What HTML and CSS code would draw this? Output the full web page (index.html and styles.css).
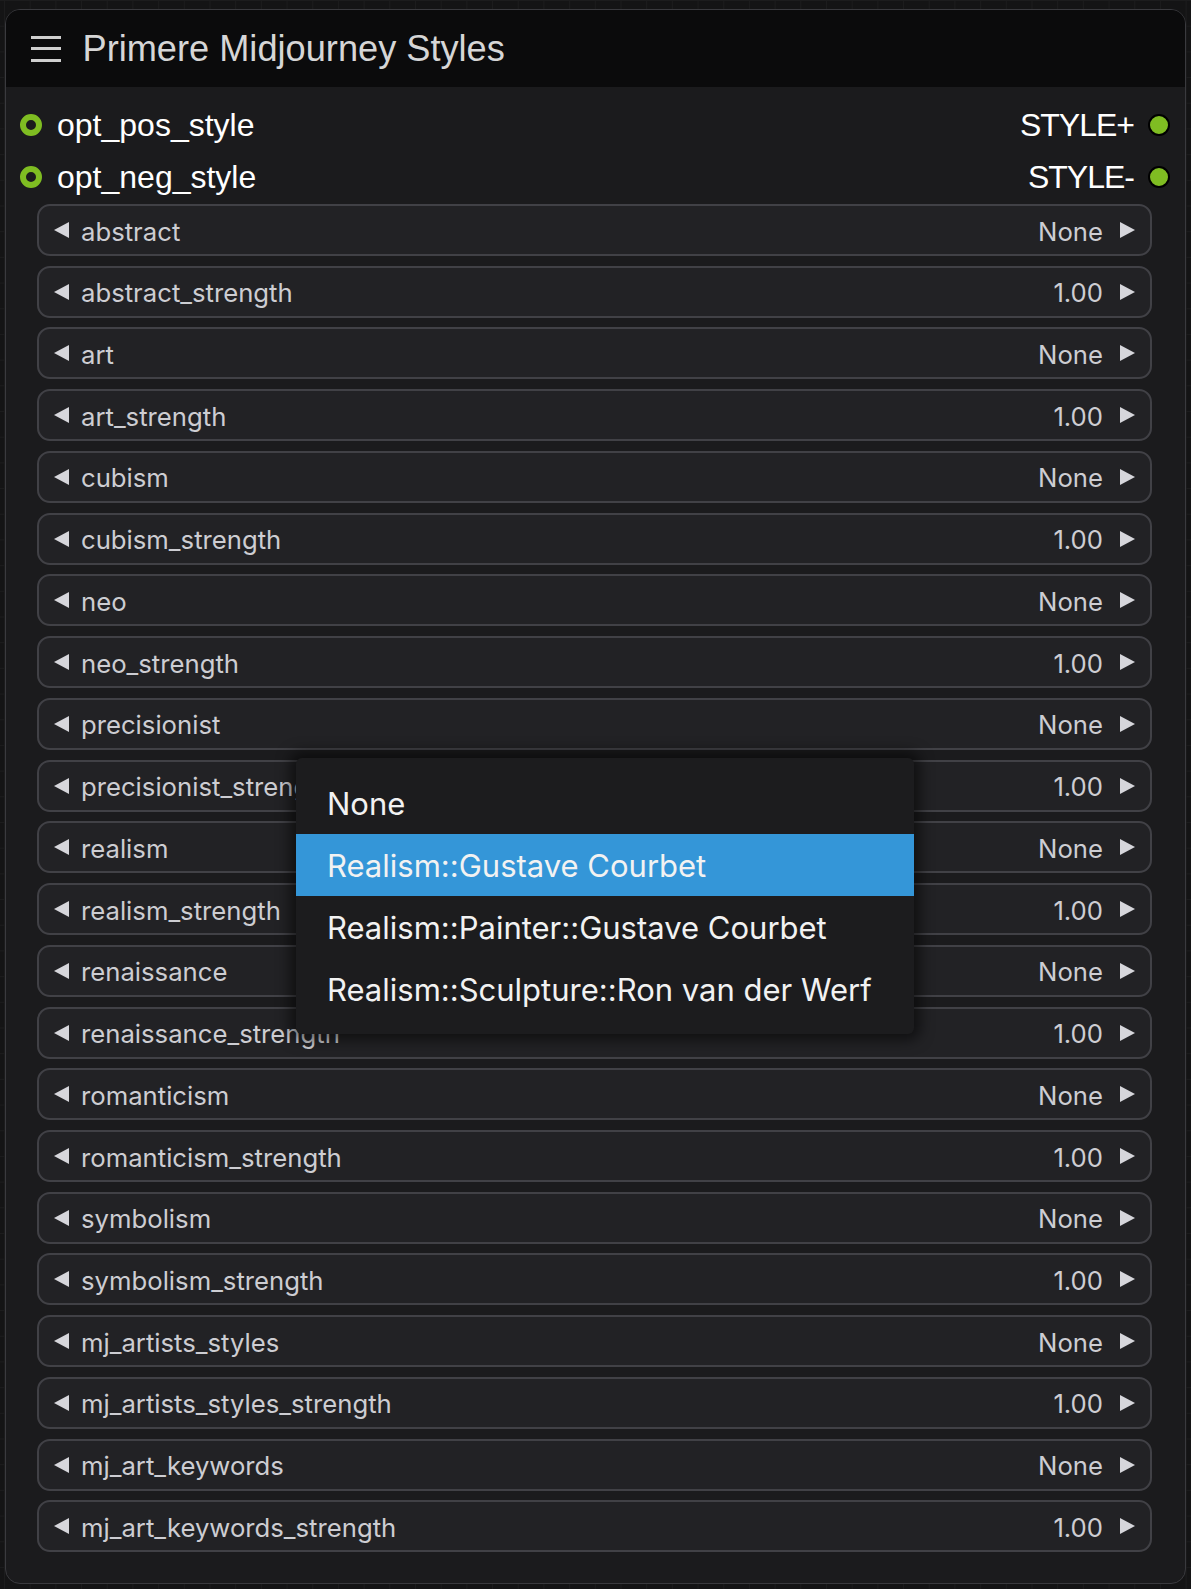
FILE: index.html
```html
<!DOCTYPE html>
<html>
<head>
<meta charset="utf-8">
<link rel="stylesheet" href="styles.css">
</head>
<body>
<div class="canvas">
  <div class="node">
    <div class="title">
      <svg class="menu-icon" width="30" height="26" viewBox="0 0 30 26">
        <rect x="0" y="0" width="30" height="3" fill="#cfcfcf"/>
        <rect x="0" y="11" width="30" height="3" fill="#cfcfcf"/>
        <rect x="0" y="23" width="30" height="3" fill="#cfcfcf"/>
      </svg>
      <span class="title-text">Primere Midjourney Styles</span>
    </div>
    <div class="body">
      <div class="io">
        <div class="io-row">
          <span class="in-dot"></span><span class="in-label">opt_pos_style</span>
          <span class="out-label">STYLE+</span><span class="out-dot"></span>
        </div>
        <div class="io-row">
          <span class="in-dot"></span><span class="in-label">opt_neg_style</span>
          <span class="out-label">STYLE-</span><span class="out-dot"></span>
        </div>
      </div>
      <div class="widgets">
        <div class="w"><span class="al"></span><span class="wn">abstract</span><span class="wv">None</span><span class="ar"></span></div>
        <div class="w"><span class="al"></span><span class="wn">abstract_strength</span><span class="wv">1.00</span><span class="ar"></span></div>
        <div class="w"><span class="al"></span><span class="wn">art</span><span class="wv">None</span><span class="ar"></span></div>
        <div class="w"><span class="al"></span><span class="wn">art_strength</span><span class="wv">1.00</span><span class="ar"></span></div>
        <div class="w"><span class="al"></span><span class="wn">cubism</span><span class="wv">None</span><span class="ar"></span></div>
        <div class="w"><span class="al"></span><span class="wn">cubism_strength</span><span class="wv">1.00</span><span class="ar"></span></div>
        <div class="w"><span class="al"></span><span class="wn">neo</span><span class="wv">None</span><span class="ar"></span></div>
        <div class="w"><span class="al"></span><span class="wn">neo_strength</span><span class="wv">1.00</span><span class="ar"></span></div>
        <div class="w"><span class="al"></span><span class="wn">precisionist</span><span class="wv">None</span><span class="ar"></span></div>
        <div class="w"><span class="al"></span><span class="wn">precisionist_strength</span><span class="wv">1.00</span><span class="ar"></span></div>
        <div class="w"><span class="al"></span><span class="wn">realism</span><span class="wv">None</span><span class="ar"></span></div>
        <div class="w"><span class="al"></span><span class="wn">realism_strength</span><span class="wv">1.00</span><span class="ar"></span></div>
        <div class="w"><span class="al"></span><span class="wn">renaissance</span><span class="wv">None</span><span class="ar"></span></div>
        <div class="w"><span class="al"></span><span class="wn">renaissance_strength</span><span class="wv">1.00</span><span class="ar"></span></div>
        <div class="w"><span class="al"></span><span class="wn">romanticism</span><span class="wv">None</span><span class="ar"></span></div>
        <div class="w"><span class="al"></span><span class="wn">romanticism_strength</span><span class="wv">1.00</span><span class="ar"></span></div>
        <div class="w"><span class="al"></span><span class="wn">symbolism</span><span class="wv">None</span><span class="ar"></span></div>
        <div class="w"><span class="al"></span><span class="wn">symbolism_strength</span><span class="wv">1.00</span><span class="ar"></span></div>
        <div class="w"><span class="al"></span><span class="wn">mj_artists_styles</span><span class="wv">None</span><span class="ar"></span></div>
        <div class="w"><span class="al"></span><span class="wn">mj_artists_styles_strength</span><span class="wv">1.00</span><span class="ar"></span></div>
        <div class="w"><span class="al"></span><span class="wn">mj_art_keywords</span><span class="wv">None</span><span class="ar"></span></div>
        <div class="w"><span class="al"></span><span class="wn">mj_art_keywords_strength</span><span class="wv">1.00</span><span class="ar"></span></div>
      </div>
    </div>
  </div>
  <div class="ctx-menu">
    <div class="item">None</div>
    <div class="item sel">Realism::Gustave Courbet</div>
    <div class="item">Realism::Painter::Gustave Courbet</div>
    <div class="item">Realism::Sculpture::Ron van der Werf</div>
  </div>
</div>
</body>
</html>
```

FILE: styles.css
```css
html, body {
  margin: 0;
  padding: 0;
}
body {
  width: 1191px;
  height: 1589px;
  overflow: hidden;
  background-color: #141415;
  background-image:
    linear-gradient(to right, #1c1c1d 1px, transparent 1px),
    linear-gradient(to bottom, #1c1c1d 1px, transparent 1px);
  background-size: 25.7px 25.7px;
  background-position: 4px 0;
}
.canvas {
  position: relative;
  width: 1191px;
  height: 1589px;
  padding-top: 9px;
  box-sizing: border-box;
}
.node {
  margin-left: 5px;
  width: 1181px;
  height: 1575px;
  box-sizing: border-box;
  border: 1.5px solid #3a3a3e;
  border-radius: 15px;
  background: #1b1b1d;
  overflow: hidden;
  display: flex;
  flex-direction: column;
}
.title {
  height: 77px;
  flex: none;
  background: #0b0b0c;
  display: flex;
  align-items: center;
  padding-left: 24.5px;
  gap: 22px;
}
.menu-icon {
  display: block;
  margin-top: 1px;
}
.title-text {
  font-family: "Liberation Sans", Arial, sans-serif;
  font-size: 36.2px;
  color: #d6d6d6;
  line-height: 1;
  margin-top: 1px;
}
.body {
  padding: 12px 0 0 0;
}
.io-row {
  height: 52px;
  display: flex;
  align-items: center;
  padding: 0 15px 0 14px;
  font-family: "Liberation Sans", Arial, sans-serif;
  font-size: 32px;
  color: #ffffff;
}
.in-dot {
  width: 10px;
  height: 10px;
  border-radius: 50%;
  border: 6px solid #7fbd22;
  background: #1b1b1d;
  flex: none;
}
.in-label {
  margin-left: 15px;
  flex: 1;
}
.out-label {
  margin-right: 14px;
  letter-spacing: -1px;
}
.out-dot {
  width: 18px;
  height: 18px;
  border-radius: 50%;
  background: #7fbd22;
  border: 2px solid #000;
  flex: none;
}
.widgets {
  padding: 1px 33px 0 31px;
  display: flex;
  flex-direction: column;
  gap: 9.74px;
}
.w {
  height: 52px;
  box-sizing: border-box;
  border: 2px solid #414146;
  border-radius: 13px;
  background: #222225;
  display: flex;
  align-items: center;
  padding: 2px 15px 0 15px;
  font-family: Inter, "Noto Sans", sans-serif;
  font-size: 25.7px;
  color: #cdcdd2;
}
.al, .ar {
  width: 0;
  height: 0;
  border-top: 8px solid transparent;
  border-bottom: 8px solid transparent;
  flex: none;
  margin-top: -2px;
}
.al {
  border-right: 15px solid #d6d6db;
}
.ar {
  border-left: 15px solid #d6d6db;
}
.wn {
  margin-left: 12px;
  flex: 1;
  white-space: nowrap;
  overflow: hidden;
}
.wv {
  margin-right: 17px;
}
.ctx-menu {
  position: absolute;
  left: 296px;
  top: 758px;
  width: 618px;
  padding: 14px 0;
  background: #1c1c1e;
  border-radius: 6px;
  box-shadow: 0 0 14px 6px rgba(0, 0, 0, 0.55);
  font-family: Inter, "Noto Sans", sans-serif;
  font-size: 31px;
  color: #f2f2f2;
}
.item {
  height: 62px;
  display: flex;
  align-items: center;
  padding-left: 31px;
  white-space: nowrap;
}
.item.sel {
  background: #3496d8;
}
```
